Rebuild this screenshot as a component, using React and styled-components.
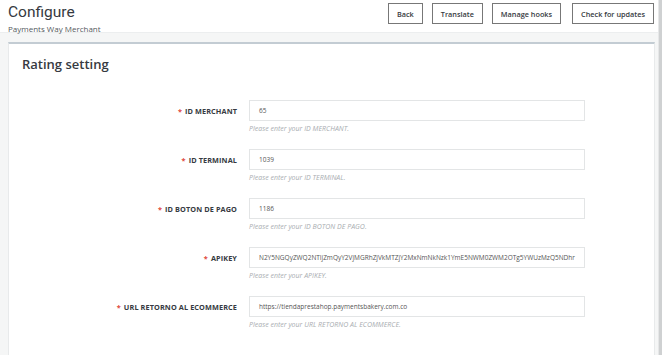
import styled, { createGlobalStyle } from "styled-components";

const GlobalStyle = createGlobalStyle`
  html, body {
    margin: 0;
    padding: 0;
    background: #f5f6f6;
  }
  body {
    font-family: "Open Sans", "Noto Sans", sans-serif;
    color: #363a41;
  }
  * {
    box-sizing: border-box;
  }
`;

const fields = [
  { label: "ID MERCHANT", value: "65" },
  { label: "ID TERMINAL", value: "1039" },
  { label: "ID BOTON DE PAGO", value: "1186" },
  {
    label: "APIKEY",
    value:
      "N2Y5NGQyZWQ2NTljZmQyY2VjMGRhZjVkMTZjY2MxNmNkNzk1YmE5NWM0ZWM2OTg5YWUzMzQ5NDhr"
  },
  {
    label: "URL RETORNO AL ECOMMERCE",
    value: "https://tiendaprestahop.paymentsbakery.com.co"
  }
];

const buttons = ["Back", "Translate", "Manage hooks", "Check for updates"];

const App = () => {
  return (
    <Page>
      <GlobalStyle />
      <Main>
        <Header>
          <TitleBlock>
            <Title>Configure</Title>
            <Subtitle>Payments Way Merchant</Subtitle>
          </TitleBlock>
          <Toolbar>
            {buttons.map(b => (
              <ToolButton key={b} wide={b === "Check for updates"}>
                {b}
              </ToolButton>
            ))}
          </Toolbar>
        </Header>
        <Content>
          <Panel>
            <PanelHeading>Rating setting</PanelHeading>
            <Form>
              {fields.map(f => (
                <Row key={f.label}>
                  <Label>
                    <Star>*</Star> {f.label}
                  </Label>
                  <Field>
                    <Input>{f.value}</Input>
                    <Help>Please enter your {f.label}.</Help>
                  </Field>
                </Row>
              ))}
            </Form>
          </Panel>
        </Content>
      </Main>
      <Scrollbar />
    </Page>
  );
};

export default App;

const Page = styled.div`
  display: flex;
  height: 355px;
  overflow: hidden;
`;

const Main = styled.div`
  flex: 1;
  display: flex;
  flex-direction: column;
  min-width: 0;
`;

const Scrollbar = styled.div`
  width: 4px;
  background: #cfd1d2;
  border-left: 1px solid #e6e7e8;
`;

const Header = styled.header`
  height: 33px;
  background: #fff;
  display: flex;
  justify-content: space-between;
  align-items: flex-start;
  padding: 2px 4px 0 8px;
  border-bottom: 1px solid #eceeef;
`;

const TitleBlock = styled.div`
  display: flex;
  flex-direction: column;
`;

const Title = styled.div`
  font-family: Roboto, "Open Sans", sans-serif;
  font-size: 15.5px;
  line-height: 20px;
  color: #363a41;
`;

const Subtitle = styled.div`
  font-size: 8px;
  line-height: 12px;
  color: #555a60;
  margin-top: 1px;
`;

const Toolbar = styled.div`
  display: flex;
  gap: 9px;
  padding-top: 1px;
`;

const ToolButton = styled.div`
  height: 21px;
  display: flex;
  align-items: center;
  justify-content: center;
  padding: 0 8px;
  margin-left: ${props => (props.wide ? "2px" : "0")};
  border: 1px solid #777;
  background: #fff;
  font-size: 7.3px;
  font-weight: 600;
  color: #363a41;
  white-space: nowrap;
`;

const Content = styled.div`
  flex: 1;
  padding: 9px 3px 0 8px;
`;

const Panel = styled.section`
  background: #fff;
  height: 100%;
  border-top: 2px solid #c3ccd3;
  border-left: 1px solid #e8eaeb;
  border-right: 1px solid #e8eaeb;
`;

const PanelHeading = styled.h2`
  margin: 0;
  padding: 9px 13px 0;
  font-size: 13px;
  font-weight: 600;
  line-height: 22px;
  color: #363a41;
`;

const Form = styled.div`
  display: flex;
  flex-direction: column;
  padding-top: 25px;
`;

const Row = styled.div`
  display: grid;
  grid-template-columns: 228px 336px;
  column-gap: 12px;
  height: 49px;
`;

const Label = styled.div`
  height: 21px;
  display: flex;
  align-items: center;
  justify-content: flex-end;
  font-size: 7.3px;
  font-weight: 700;
  color: #363a41;
  letter-spacing: 0.1px;
  white-space: nowrap;
`;

const Star = styled.span`
  color: #e0463b;
  margin-right: 3px;
`;

const Field = styled.div`
  display: flex;
  flex-direction: column;
`;

const Input = styled.div`
  height: 21px;
  border: 1px solid #e3e5e6;
  display: flex;
  align-items: center;
  padding: 0 9px;
  font-size: 6.5px;
  color: #555;
  white-space: nowrap;
  overflow: hidden;
`;

const Help = styled.div`
  margin-top: 3px;
  font-size: 7px;
  line-height: 10px;
  font-style: italic;
  color: #a9adb1;
`;
